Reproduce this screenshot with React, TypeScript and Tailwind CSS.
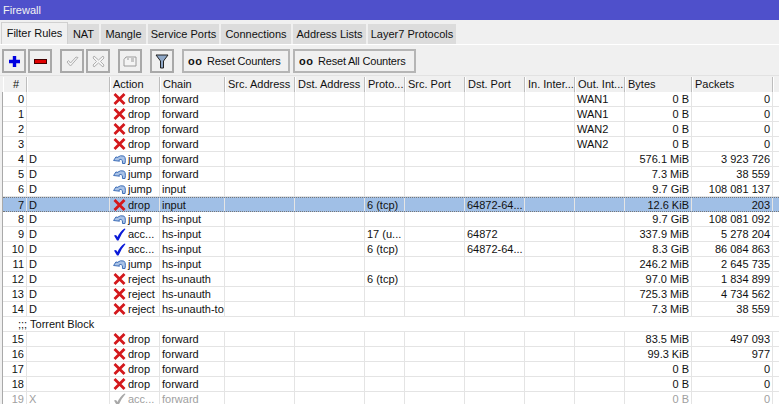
import React from 'react'

const cols = [
  { t: '#', w: 'w-[24px]', c: 'text-center' },
  { t: '', w: 'w-[83px]', c: '' },
  { t: 'Action', w: 'w-[50px]', c: '' },
  { t: 'Chain', w: 'w-[65px]', c: '' },
  { t: 'Src. Address', w: 'w-[70px]', c: '' },
  { t: 'Dst. Address', w: 'w-[70px]', c: '' },
  { t: 'Proto...', w: 'w-[40px]', c: '' },
  { t: 'Src. Port', w: 'w-[60px]', c: '' },
  { t: 'Dst. Port', w: 'w-[60px]', c: '' },
  { t: 'In. Inter...', w: 'w-[50px]', c: '' },
  { t: 'Out. Int...', w: 'w-[50px]', c: '' },
  { t: 'Bytes', w: 'w-[67px]', c: '' },
  { t: 'Packets', w: 'w-[81px]', c: '' },
]

type Row = { n: string; f?: string; a: string; c: string; p?: string; dp?: string; o?: string; b?: string; k?: string; sel?: boolean; off?: boolean }

const rows: (Row | string)[] = [
  { n: '0', a: 'drop', c: 'forward', o: 'WAN1', b: '0 B', k: '0' },
  { n: '1', a: 'drop', c: 'forward', o: 'WAN1', b: '0 B', k: '0' },
  { n: '2', a: 'drop', c: 'forward', o: 'WAN2', b: '0 B', k: '0' },
  { n: '3', a: 'drop', c: 'forward', o: 'WAN2', b: '0 B', k: '0' },
  { n: '4', f: 'D', a: 'jump', c: 'forward', b: '576.1 MiB', k: '3 923 726' },
  { n: '5', f: 'D', a: 'jump', c: 'forward', b: '7.3 MiB', k: '38 559' },
  { n: '6', f: 'D', a: 'jump', c: 'input', b: '9.7 GiB', k: '108 081 137' },
  { n: '7', f: 'D', a: 'drop', c: 'input', p: '6 (tcp)', dp: '64872-64...', b: '12.6 KiB', k: '203', sel: true },
  { n: '8', f: 'D', a: 'jump', c: 'hs-input', b: '9.7 GiB', k: '108 081 092' },
  { n: '9', f: 'D', a: 'acc...', c: 'hs-input', p: '17 (u...', dp: '64872', b: '337.9 MiB', k: '5 278 204' },
  { n: '10', f: 'D', a: 'acc...', c: 'hs-input', p: '6 (tcp)', dp: '64872-64...', b: '8.3 GiB', k: '86 084 863' },
  { n: '11', f: 'D', a: 'jump', c: 'hs-input', b: '246.2 MiB', k: '2 645 735' },
  { n: '12', f: 'D', a: 'reject', c: 'hs-unauth', p: '6 (tcp)', b: '97.0 MiB', k: '1 834 899' },
  { n: '13', f: 'D', a: 'reject', c: 'hs-unauth', b: '725.3 MiB', k: '4 734 562' },
  { n: '14', f: 'D', a: 'reject', c: 'hs-unauth-to', b: '7.3 MiB', k: '38 559' },
  ';;; Torrent Block',
  { n: '15', a: 'drop', c: 'forward', b: '83.5 MiB', k: '497 093' },
  { n: '16', a: 'drop', c: 'forward', b: '99.3 KiB', k: '977' },
  { n: '17', a: 'drop', c: 'forward', b: '0 B', k: '0' },
  { n: '18', a: 'drop', c: 'forward', b: '0 B', k: '0' },
  { n: '19', f: 'X', a: 'acc...', c: 'forward', b: '0 B', k: '0', off: true },
]

function ActionIcon({ a, off }: { a: string; off?: boolean }) {
  if (a === 'jump') {
    return (
      <svg width="13" height="11" viewBox="0 0 13 11" className="shrink-0">
        <path d="M0.6 6.5 L3 2.8 L4 3.6 Q7.5 0.8 10.8 2 Q12.6 3.2 12.4 6.5 L12 9.5 L9.5 9.5 Q10 5.8 8 5.4 Q6.6 5.2 5.8 6 L6.6 7.2 Z" fill="#a9c2e6" stroke="#3f6fb8" strokeWidth="1" />
      </svg>
    )
  }
  if (a === 'acc...') {
    return (
      <svg width="13" height="13" viewBox="0 0 13 13" className="shrink-0">
        <path d="M1 7.5 L3 7 L4.6 9 Q6.5 4 11.5 0.5 L12.5 1 Q8 6 5.5 12.5 L4 12.5 Z" fill={off ? '#a8a8a8' : '#0a1ad8'} />
      </svg>
    )
  }
  return (
    <svg width="13" height="12" viewBox="0 0 13 12" className="shrink-0">
      <path d="M1.5 1 L11.5 11 M11.5 1 L1.5 11" fill="none" stroke="#d4181c" strokeWidth="2.8" />
    </svg>
  )
}

function TinyBtn({ children }: { children: React.ReactNode }) {
  return <div className="w-[24px] h-[24px] border-2 border-[#a9a9a9] bg-[#f0f0f0] flex items-center justify-center">{children}</div>
}

function ResetBtn({ label, w }: { label: string; w: string }) {
  return (
    <div className={`${w} h-[24px] border-2 border-[#b5b5b5] bg-[#f0f0f0] flex items-center pl-[4px] gap-[5px] whitespace-nowrap`}>
      <span className="font-bold text-[11px] tracking-[0.5px] w-[14px]">oo</span>
      <span className="tracking-[-0.2px]">{label}</span>
    </div>
  )
}

const Tab = ({ t, w }: { t: string; w: string }) => (
  <div className={`${w} h-[20px] bg-[#dcdcdc] border-r-2 border-[#f0f0f0] flex items-center justify-center whitespace-nowrap text-[#111]`}>{t}</div>
)

export default function App() {
  return (
    <div className="w-[779px] h-[404px] overflow-hidden bg-[#f0f0f0] text-[11px] leading-[15px] text-[#111]" style={{ fontFamily: '"Liberation Sans", Arial, sans-serif' }}>
      <div className="h-[20px] bg-[#4f50cb] text-[#f2f2f2] pl-[3px] flex items-center">Firewall</div>

      <div className="h-[25px] pt-[3px] flex items-end border-b border-white pl-[1px]">
        <div className="w-[67px] h-[22px] bg-[#f0f0f0] border-t border-l border-r border-[#d0d0d0] flex items-center justify-center">Filter Rules</div>
        <Tab t="NAT" w="w-[33px]" />
        <Tab t="Mangle" w="w-[47px]" />
        <Tab t="Service Ports" w="w-[73px]" />
        <Tab t="Connections" w="w-[72px]" />
        <Tab t="Address Lists" w="w-[75px]" />
        <Tab t="Layer7 Protocols" w="w-[90px]" />
      </div>

      <div className="h-[30px] flex items-center pl-[2px] pt-[2px]">
        <TinyBtn>
          <svg width="13" height="13" viewBox="0 0 13 13"><path d="M6.5 1 V12 M1 6.5 H12" stroke="#0000e0" strokeWidth="3.4" /></svg>
        </TinyBtn>
        <div className="ml-[2px]">
          <TinyBtn>
            <svg width="13" height="5" viewBox="0 0 13 5"><rect x="0.5" y="0.5" width="12" height="4" fill="#e00000" stroke="#400" strokeWidth="1" /></svg>
          </TinyBtn>
        </div>
        <div className="ml-[8px]">
          <TinyBtn>
            <svg width="13" height="11" viewBox="0 0 13 11"><path d="M1 6 L4.5 10 L12 1.5 L10 1 L4.5 7 L2.5 4.5 Z" fill="#f4f4f4" stroke="#b0b0b0" /></svg>
          </TinyBtn>
        </div>
        <div className="ml-[2px]">
          <TinyBtn>
            <svg width="13" height="13" viewBox="0 0 13 13"><path d="M2 1 L6.5 5 L11 1 L12 3 L8.5 6.5 L12 10 L11 12 L6.5 8 L2 12 L1 10 L4.5 6.5 L1 3 Z" fill="#f4f4f4" stroke="#b0b0b0" /></svg>
          </TinyBtn>
        </div>
        <div className="ml-[8px]">
          <TinyBtn>
            <svg width="14" height="11" viewBox="0 0 14 11"><path d="M3 1 H13 V10 H1 V3.5 Z M4 3 H6 M8 3 H11 M8 5 H11" fill="#f4f4f4" stroke="#9a9a9a" /></svg>
          </TinyBtn>
        </div>
        <div className="ml-[8px]">
          <TinyBtn>
            <svg width="14" height="15" viewBox="0 0 14 15"><path d="M1 1 H13 L8.5 7 V14 H5.5 V7 Z" fill="#8fa8c8" stroke="#222" strokeWidth="1" /></svg>
          </TinyBtn>
        </div>
        <div className="ml-[8px]"><ResetBtn label="Reset Counters" w="w-[108px]" /></div>
        <div className="ml-[3px]"><ResetBtn label="Reset All Counters" w="w-[123px]" /></div>
      </div>

      <div className="h-[17px] flex pl-[3px] bg-[#f0f0f0] border-t border-[#e2e2e2] pt-[1px]">
        {cols.map((c, i) => (
          <div key={i} className={`${c.w} ${c.c} shrink-0 border-r border-l border-r-[#bdbdbd] border-l-white pl-[2px] whitespace-nowrap overflow-hidden`}>{c.t}</div>
        ))}
        <div className="grow border-l border-white" />
      </div>

      <div className="ml-[2px] w-[777px] border-l border-[#a9a9a9] bg-white">
        {rows.map((r, i) => typeof r === 'string' ? (
          <div key={i} className="h-[15px] border-b border-[#e4e4e4] pl-[15px] leading-[14px] bg-white">{r}</div>
        ) : (
          <div key={i} className={`h-[15px] flex leading-[14px] border-b ${r.sel ? 'bg-[#a0bfe6] border-b-[#777] border-t border-dotted border-[#777]' : 'bg-white border-[#e4e4e4]'} ${r.off ? 'text-[#a0a0a0]' : ''}`}>
            <Cell w="w-[24px]" right>{r.n}</Cell>
            <Cell w="w-[83px]">{r.f}</Cell>
            <div className="w-[50px] shrink-0 border-r border-[#e4e4e4] flex items-center pl-[3px] gap-[2px]">
              <ActionIcon a={r.a} off={r.off} />
              <span>{r.a}</span>
            </div>
            <Cell w="w-[65px]">{r.c}</Cell>
            <Cell w="w-[70px]" />
            <Cell w="w-[70px]" />
            <Cell w="w-[40px]">{r.p}</Cell>
            <Cell w="w-[60px]" />
            <Cell w="w-[60px]">{r.dp}</Cell>
            <Cell w="w-[50px]" />
            <Cell w="w-[50px]">{r.o}</Cell>
            <Cell w="w-[67px]" right>{r.b}</Cell>
            <Cell w="w-[81px]" right>{r.k}</Cell>
          </div>
        ))}
      </div>
    </div>
  )
}

function Cell({ w, right, children }: { w: string; right?: boolean; children?: React.ReactNode }) {
  return (
    <div className={`${w} shrink-0 border-r border-[#e4e4e4] whitespace-nowrap overflow-hidden ${right ? 'text-right pr-[2px]' : 'pl-[2px]'}`}>{children}</div>
  )
}
